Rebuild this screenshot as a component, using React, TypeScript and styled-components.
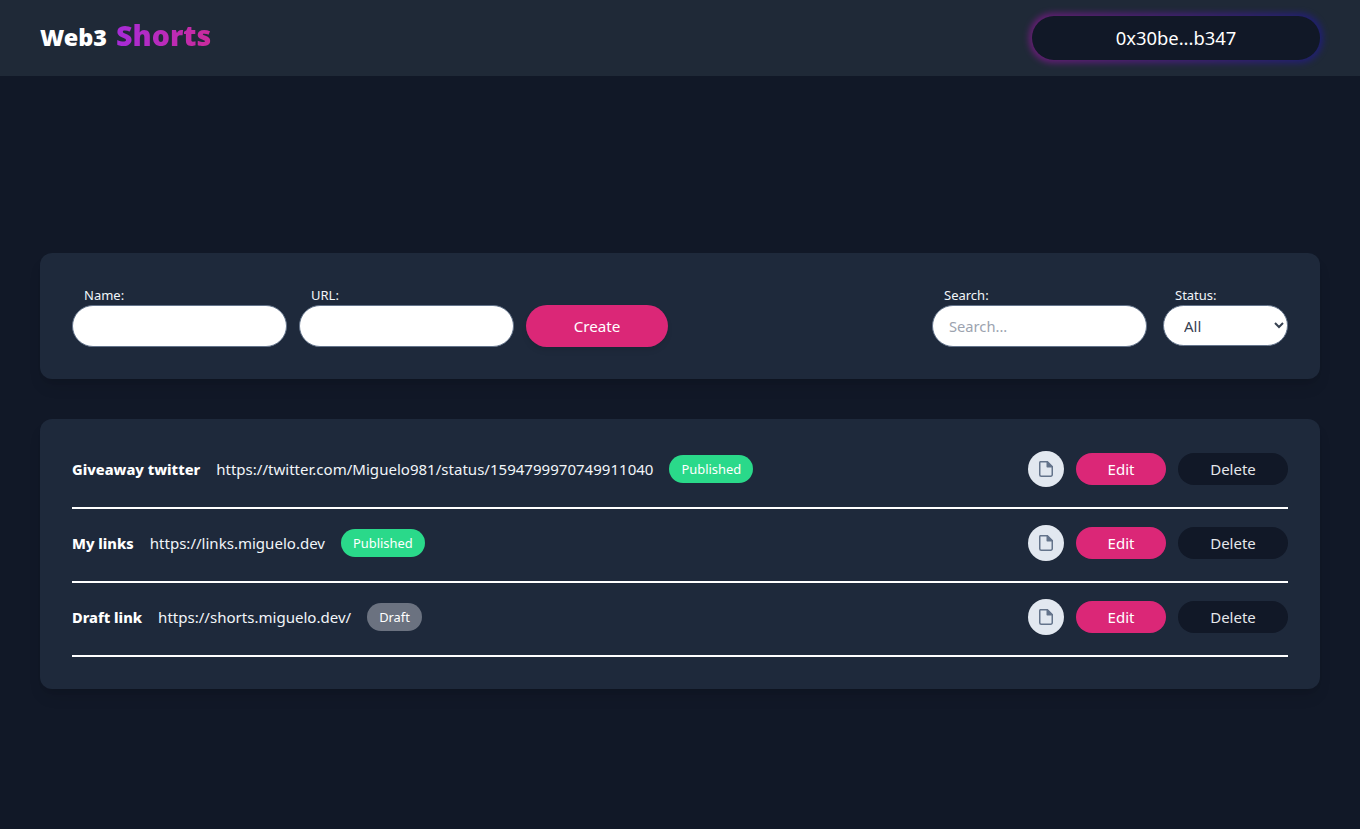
import React from "react";
import styled, { createGlobalStyle } from "styled-components";

const Global = createGlobalStyle`
  html, body { margin: 0; padding: 0; background: #111827; }
  body { font-family: "Noto Sans", "Open Sans", sans-serif; color: #fff; }
  * { box-sizing: border-box; }
`;

const Page = styled.div`
  min-height: 829px;
  background: #111827;
`;

const Header = styled.header`
  height: 76px;
  background: #1f2937;
  padding: 0 40px;
  display: flex;
  align-items: center;
  justify-content: space-between;
`;

const Logo = styled.h1`
  margin: 0 0 4px;
  display: flex;
  align-items: baseline;
  gap: 9px;
  font-family: "Noto Sans", sans-serif;
  font-size: 23.4px;
  line-height: 32px;
  font-weight: 900;
`;

const LogoAccent = styled.span`
  font-family: "Open Sans", "Noto Sans", sans-serif;
  font-size: 28.6px;
  font-weight: 800;
  background: linear-gradient(90deg, #a72bd8, #cb2b9c);
  -webkit-background-clip: text;
  background-clip: text;
  color: transparent;
`;

const WalletWrap = styled.div`
  position: relative;
  width: 288px;
  height: 44px;
  &::before {
    content: "";
    position: absolute;
    inset: -3px;
    border-radius: 24px;
    background: linear-gradient(90deg, #86198f, #1e1b8b);
    opacity: 0.7;
    filter: blur(3px);
  }
`;

const Wallet = styled.button`
  position: relative;
  width: 100%;
  height: 100%;
  border: 0;
  border-radius: 22px;
  background: #111827;
  color: #fff;
  font: 400 18.4px/28px "Noto Sans", sans-serif;
`;

const Main = styled.main`
  padding: 177px 40px 0;
  display: flex;
  flex-direction: column;
  gap: 40px;
`;

const Panel = styled.section`
  background: #1e293b;
  border-radius: 12px;
  padding: 32px;
  box-shadow: 0 10px 15px -3px rgba(0, 0, 0, 0.1), 0 4px 6px -4px rgba(0, 0, 0, 0.1);
`;

const Toolbar = styled(Panel)`
  height: 126px;
  padding-top: 35px;
  display: flex;
  justify-content: space-between;
  align-items: flex-start;
`;

const Group = styled.div<{ $gap: number }>`
  display: flex;
  gap: ${(p) => p.$gap}px;
  align-items: flex-end;
`;

const Field = styled.label`
  display: flex;
  flex-direction: column;
  gap: 2px;
`;

const FieldLabel = styled.span`
  padding-left: 12px;
  font-size: 13px;
  line-height: 15px;
  color: #f1f5f9;
`;

const TextInput = styled.input`
  width: 215px;
  height: 42px;
  padding: 0 16px;
  background: #fff;
  border: 1px solid #64748b;
  border-radius: 21px;
  font: 400 14.7px "Noto Sans", sans-serif;
  outline: none;
  &::placeholder { color: #9ca3af; opacity: 1; }
`;

const StatusSelect = styled.select`
  width: 125px;
  height: 41px;
  margin-bottom: 1px;
  padding: 0 0 0 16px;
  background: #fff;
  color: #374151;
  border: 1px solid #64748b;
  border-radius: 21px;
  font: 400 15px "Noto Sans", sans-serif;
  outline: none;
`;

const CreateButton = styled.button`
  width: 142px;
  height: 42px;
  border: 0;
  border-radius: 21px;
  background: #db2777;
  color: #fff;
  font: 400 15.2px "Noto Sans", sans-serif;
  box-shadow: 0 4px 6px -1px rgba(0, 0, 0, 0.1);
`;

const ListPanel = styled(Panel)`
  padding: 16px 32px 32px;
`;

const Row = styled.div`
  height: 74px;
  border-bottom: 2px solid #fff;
  display: flex;
  align-items: center;
  justify-content: space-between;
  padding-bottom: 4px;
`;

const RowInfo = styled.div`
  display: flex;
  align-items: center;
  gap: 16px;
`;

const RowName = styled.strong`
  font-size: 14.6px;
  font-weight: 800;
  font-family: "Noto Sans", sans-serif;
`;

const RowUrl = styled.span`
  font-size: 15.05px;
  color: #f1f5f9;
`;

const Badge = styled.span<{ $draft?: boolean }>`
  height: 28px;
  padding: 0 12px;
  border-radius: 14px;
  display: inline-flex;
  align-items: center;
  font-size: 12.9px;
  background: ${(p) => (p.$draft ? "#6b7280" : "#2ad98a")};
  color: #fff;
`;

const RowActions = styled.div`
  display: flex;
  align-items: center;
  gap: 12px;
`;

const IconButton = styled.button`
  width: 36px;
  height: 36px;
  padding: 0;
  border: 0;
  border-radius: 50%;
  background: #e2e8f0;
  display: flex;
  align-items: center;
  justify-content: center;
`;

const ActionButton = styled.button<{ $danger?: boolean }>`
  height: 32px;
  width: ${(p) => (p.$danger ? 110 : 90)}px;
  border: 0;
  border-radius: 16px;
  background: ${(p) => (p.$danger ? "#111827" : "#db2777")};
  color: ${(p) => (p.$danger ? "#e5e7eb" : "#fff")};
  font: 400 15px "Noto Sans", sans-serif;
`;

const DocIcon = () => (
  <svg width="14" height="16" viewBox="0 0 14 16" fill="none" stroke="#64748b" strokeWidth="1.5" strokeLinejoin="round">
    <path d="M2.25 0.75h6l5 5v8a1.5 1.5 0 0 1-1.5 1.5h-9.5a1.5 1.5 0 0 1-1.5-1.5v-12a1.5 1.5 0 0 1 1.5-1.5z" />
    <path d="M8.25 0.75v5h5z" fill="#64748b" />
  </svg>
);

const links = [
  { name: "Giveaway twitter", url: "https://twitter.com/Miguelo981/status/1594799970749911040", status: "Published" },
  { name: "My links", url: "https://links.miguelo.dev", status: "Published" },
  { name: "Draft link", url: "https://shorts.miguelo.dev/", status: "Draft" },
];

export default function App() {
  return (
    <Page>
      <Global />
      <Header>
        <Logo>
          Web3 <LogoAccent>Shorts</LogoAccent>
        </Logo>
        <WalletWrap>
          <Wallet>0x30be...b347</Wallet>
        </WalletWrap>
      </Header>
      <Main>
        <Toolbar>
          <Group $gap={12}>
            <Field>
              <FieldLabel>Name:</FieldLabel>
              <TextInput />
            </Field>
            <Field>
              <FieldLabel>URL:</FieldLabel>
              <TextInput />
            </Field>
            <CreateButton>Create</CreateButton>
          </Group>
          <Group $gap={16}>
            <Field>
              <FieldLabel>Search:</FieldLabel>
              <TextInput placeholder="Search..." />
            </Field>
            <Field>
              <FieldLabel>Status:</FieldLabel>
              <StatusSelect defaultValue="All">
                <option>All</option>
              </StatusSelect>
            </Field>
          </Group>
        </Toolbar>
        <ListPanel>
          {links.map((l) => (
            <Row key={l.name}>
              <RowInfo>
                <RowName>{l.name}</RowName>
                <RowUrl>{l.url}</RowUrl>
                <Badge $draft={l.status === "Draft"}>{l.status}</Badge>
              </RowInfo>
              <RowActions>
                <IconButton aria-label="Details">
                  <DocIcon />
                </IconButton>
                <ActionButton>Edit</ActionButton>
                <ActionButton $danger>Delete</ActionButton>
              </RowActions>
            </Row>
          ))}
        </ListPanel>
      </Main>
    </Page>
  );
}
